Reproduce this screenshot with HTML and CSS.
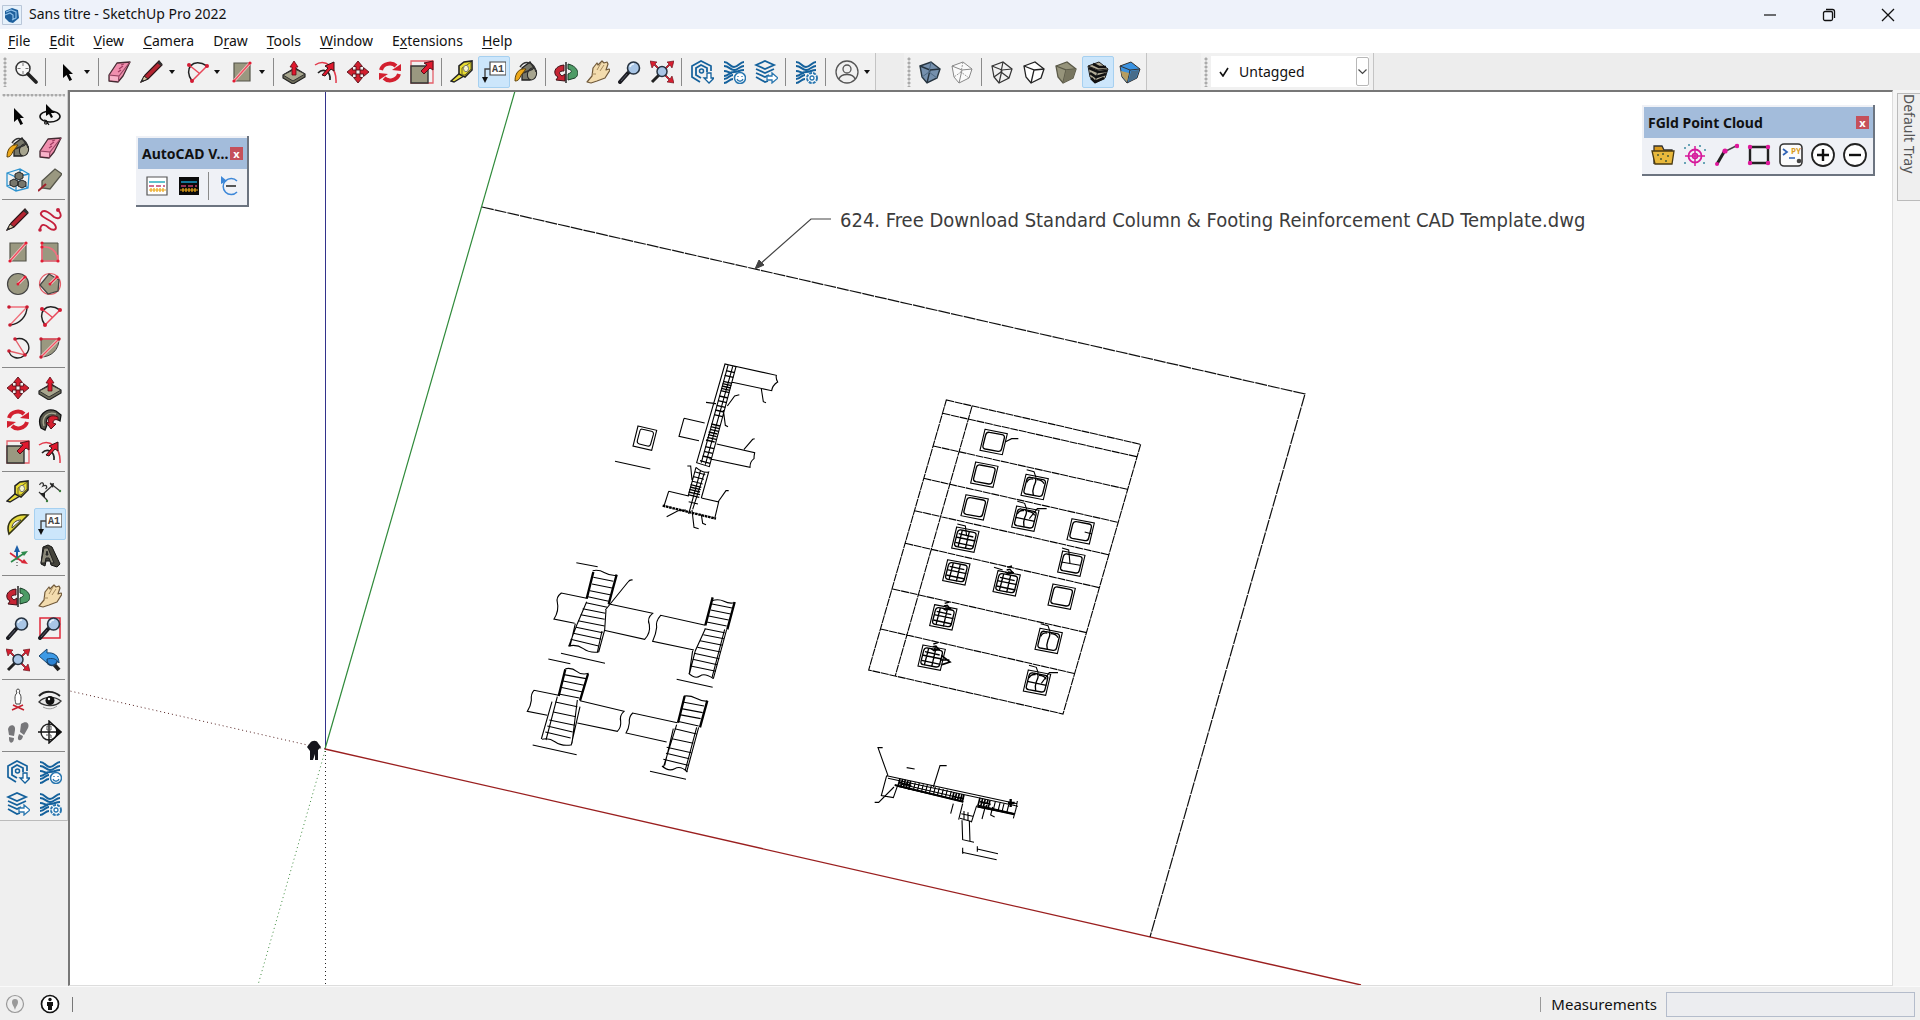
FILE: index.html
```html
<!DOCTYPE html>
<html lang="en">
<head>
<meta charset="utf-8">
<title>Sans titre - SketchUp Pro 2022</title>
<link rel="stylesheet" href="styles.css">
</head>
<body>
<svg class="sprite" aria-hidden="true">
<defs>
<g id="glass"><path d="M2 22l8-9" stroke="#1c1c22" stroke-width="4" stroke-linecap="round"/><path d="M3 21l6-7" stroke="#555a66" stroke-width="1"/><circle cx="15.500" cy="8" r="6" fill="#a9c6e6" stroke="#26323f" stroke-width="1.600"/><path d="M12 7a4 4 0 0 1 4-3" stroke="#e8f2fb" stroke-width="1.500"/></g>
<g id="waves"><path d="M2 2c5 0 6 5 10 5s6-5 10-5M2 6c5 0 6 4 10 4s6-4 10-4M2 11c4 0 5 2 8 2M2 16c5 0 5-4 10-4s5-2 10-2M2 19c5 0 5-4 9-4M2 23c4 0 5-4 9-4" stroke="#14619c" stroke-width="2"/></g>
<symbol id="i-find" viewBox="0 0 24 24"><circle cx="9" cy="8.500" r="7" stroke="#333" stroke-width="1.500" fill="#f8f8f8"/><path d="M9 3v3M9 11v3M3.500 8.500h3M11.500 8.500h3" stroke="#777"/><path d="M14 14l8 8" stroke="#222" stroke-width="3.600" stroke-linecap="round"/></symbol>
<symbol id="i-cursor" viewBox="0 0 24 24"><path d="M8 4v14l3.500-3 3 6 2.500-1.200-3-5.800h4z" fill="#050505"/></symbol>
<symbol id="i-lasso" viewBox="0 0 24 24"><ellipse cx="12" cy="12.500" rx="10" ry="5.500" stroke="#111" stroke-width="1.600"/><path d="M6 16c4 0 4 4 2 4s-2-3 1-2l2 3" stroke="#111" stroke-width="1.200"/><path d="M8 0v12l3-2 2 4 2-1-2-4h4z" fill="#050505"/></symbol>
<symbol id="i-eraser" viewBox="0 0 24 24"><path d="M2 15L10 3l13-1-7 14-5 6-9-1z" fill="#f08fae" stroke="#442a32" stroke-width="1.300" stroke-linejoin="round"/><path d="M2 15l10 1 11-14M12 16l-1 6" stroke="#8f4360" stroke-width="1.100"/><path d="M3 16l8 1v4l-8-1z" fill="#f7b3c9"/><path d="M14 5l3-1M12 9l4-3M11 12l3-2" stroke="#a03b62" stroke-width="1.200"/></symbol>
<symbol id="i-pencil" viewBox="0 0 24 24"><path d="M1 22l4-7L19 1l3 4L8 19z" fill="#b52531" stroke="#2c1518" stroke-width="1.200"/><path d="M1 22l3-6 4 3z" fill="#d7c4a3" stroke="#222"/><path d="M1 22l1.500-3 1.500 1.700zM17 3l4 3 1.500-2-3-3z" fill="#333"/></symbol>
<symbol id="i-arc2" viewBox="0 0 24 24"><path d="M7 21C-2 9 8-3 22 6" stroke="#222" stroke-width="1.500"/><path d="M4 5l10 8M22 6L7 21" stroke="#e8485a" stroke-width="1.500"/><g fill="#d31b33"><circle cx="4" cy="5" r="2"/><circle cx="22" cy="6" r="2"/><circle cx="7" cy="21" r="2"/></g></symbol>
<symbol id="i-rect" viewBox="0 0 24 24"><path d="M4 3h16v18H4z" fill="#9a9880" stroke="#55554a" stroke-width="1.200"/><path d="M4 21L20 3" stroke="#f3c9c9" stroke-width="3"/><path d="M4 21L20 3" stroke="#ef5060" stroke-width="1.500"/><circle cx="4" cy="21" r="1.600" fill="#e31b33"/><circle cx="20" cy="3" r="1.600" fill="#e31b33"/></symbol>
<symbol id="i-push" viewBox="0 0 24 24"><path d="M1 15l12-7 10 6v3l-12 7-10-6z" fill="#6e6d5a" stroke="#222" stroke-width="1.200"/><path d="M1 15l12-6 10 5-12 7z" fill="#a9a78e" stroke="#333"/><path d="M12 1l4 6h-2v8h-4V7H8z" fill="#e0182d" stroke="#5a0d15" stroke-width=".8"/></symbol>
<symbol id="i-offset" viewBox="0 0 24 24"><path d="M1 5c10-7 22 2 21 18" stroke="#e2394a" stroke-width="1.500"/><path d="M4 13c5-5 13-2 12 7" stroke="#222" stroke-width="1.700"/><path d="M8 15l6-7-3-2 9-4v9l-3-2-6 7z" fill="#e0182d" stroke="#321014"/></symbol>
<symbol id="i-move" viewBox="0 0 24 24"><path id="mv" d="M12 1l4.500 5.500H14V10h-4V6.500H7.500z" fill="#d3202f" stroke="#55121a" stroke-width=".9"/><use href="#mv" transform="rotate(90 12 12)"/><use href="#mv" transform="rotate(180 12 12)"/><use href="#mv" transform="rotate(270 12 12)"/></symbol>
<symbol id="i-rotate" viewBox="0 0 24 24"><path d="M3 10C5 3 14 2 18 6" stroke="#d3202f" stroke-width="4"/><path d="M14 10l9-6v7z" fill="#d3202f"/><path d="M21 14c-2 7-11 8-15 4" stroke="#d3202f" stroke-width="4"/><path d="M10 14l-9 6v-7z" fill="#d3202f"/></symbol>
<symbol id="i-scale" viewBox="0 0 24 24"><path d="M1 1h22v22H1z" stroke="#e4606a" stroke-width="1.300"/><path d="M1 6h17v17H1z" fill="#9a9880" stroke="#333" stroke-width="1.400"/><path d="M11 11l6-6-3-2 9-2v9l-3-2-6 6z" fill="#e0182d" stroke="#55121a"/></symbol>
<symbol id="i-tape" viewBox="0 0 24 24"><path d="M1 21l9-8 4 3-10 6z" fill="#eadf3a" stroke="#222" stroke-width="1.400"/><path d="M9 14V6l5-4 8-1v9l-7 7z" fill="#e8dc32" stroke="#222" stroke-width="1.600"/><path d="M12 8l5-3 4-3v7l-6 6-3 0z" stroke="#6a6420"/><ellipse cx="16" cy="8.500" rx="2.500" ry="3.200" fill="#f8f6cf" stroke="#777"/></symbol>
<symbol id="i-text" viewBox="0 0 24 24"><path d="M8 2h16v13H8z" fill="#fff" stroke="#444" stroke-width="1.200"/><path d="M8 9H3v11" stroke="#444" stroke-width="1.400"/><path d="M0 17h6l-3 6z" fill="#111"/><text x="10" y="12" class="glyph-a1">A1</text></symbol>
<symbol id="i-paint" viewBox="0 0 24 24"><path d="M8 8l8-6 6 9-6 9H8z" fill="#77776a" stroke="#222" stroke-width="1.300"/><ellipse cx="18" cy="14" rx="4.500" ry="6" fill="#a7a58f" stroke="#222" transform="rotate(15 18 14)"/><path d="M6 7c6-9 15-3 16 5M9 13l10-4" stroke="#333" stroke-width="1.500"/><path d="M1 21C1 12 6 8 12 9L8 14c-2 2-2 7-7 7z" fill="#eda81a" stroke="#5f430c"/></symbol>
<symbol id="i-orbit" viewBox="0 0 24 24"><path d="M10 5C-1 6-1 15 4 17l-2 3 9 1v-7l-3 2C4 13 5 11 10 11z" fill="#c62534" stroke="#3f1117"/><path d="M14 4c12 3 11 12 7 14l-7 2v-6c5-2 4-4 0-5z" fill="#4d9b66" stroke="#173a25"/><path d="M12 2v21" stroke="#222" stroke-width="1.500"/></symbol>
<symbol id="i-hand" viewBox="0 0 24 24"><path d="M1 22l5-6 1-8 4-5 1 2 4-4 2 2 3-1 1 2-2 6 3-1 1 1-5 8-8 3-6 2z" fill="#f3dcae" stroke="#70593a" stroke-width="1.200" stroke-linejoin="round"/><path d="M11 10l4-7M14 11l4-6M10 14l-4 0" stroke="#a58a5e"/></symbol>
<symbol id="i-zoom" viewBox="0 0 24 24"><use href="#glass"/></symbol>
<symbol id="i-zoomwin" viewBox="0 0 24 24"><path d="M2 2h20v20H2z" stroke="#e0283a" stroke-width="1.500"/><use href="#glass"/></symbol>
<symbol id="i-extents" viewBox="0 0 24 24"><path d="M2 22l8-8" stroke="#222" stroke-width="3"/><g fill="#d81f30" stroke="#5a0d15" stroke-width=".6"><path id="ex" d="M0 1l7 1-2 2 4 4-1 1-4-4-2 3z"/><use href="#ex" transform="matrix(-1 0 0 1 24 0)"/><use href="#ex" transform="rotate(180 12 12)"/></g><circle cx="12" cy="11.500" r="5" fill="#a9c6e6" stroke="#26323f" stroke-width="1.500"/></symbol>
<symbol id="i-prev" viewBox="0 0 24 24"><path d="M13 13l8 9" stroke="#222" stroke-width="4"/><circle cx="14" cy="12" r="5.500" fill="#2c83d4" stroke="#20405f" stroke-width="1.500"/><path d="M1 8l8-7v4c7-1 12 3 12 10-3-5-7-5-12-4v4z" fill="#3d9ae6" stroke="#1a466f"/></symbol>
<symbol id="i-house" viewBox="0 0 24 24"><path d="M21 11V6l-10-5-9 5v11l8 5" stroke="#14619c" stroke-width="1.700"/><path d="M17 12V8l-6-3-5 3v7l5 3" stroke="#14619c" stroke-width="1.800"/><circle cx="11.500" cy="11" r="2" stroke="#14619c" stroke-width="1.500"/><path d="M17 13h4v5h3l-5 5-5-5h3z" fill="#fff" stroke="#14619c" stroke-width="1.300"/></symbol>
<symbol id="i-share" viewBox="0 0 24 24"><use href="#waves"/><circle cx="18" cy="18" r="5.500" fill="#fff" stroke="#2a77b0" stroke-width="1.500"/><path d="M15 19c1 3 5 3 6 0M16 16v1M20 16v1" stroke="#2a77b0" stroke-width="1.300"/></symbol>
<symbol id="i-layers" viewBox="0 0 24 24"><path d="M2 5l9-4 9 4-9 4zM2 9l9 4 9-4M2 13l9 4 4-2M2 17l9 5 3-1" stroke="#14619c" stroke-width="1.800"/><path d="M13 16h5v-3l6 5-6 5v-3h-5z" fill="#fff" stroke="#2a77b0" stroke-width="1.300"/></symbol>
<symbol id="i-manager" viewBox="0 0 24 24"><use href="#waves"/><circle cx="18" cy="18" r="5" fill="#fff" stroke="#2a77b0" stroke-width="2" stroke-dasharray="3 1"/><circle cx="18" cy="18" r="2" stroke="#2a77b0" stroke-width="1.300"/></symbol>
<symbol id="i-user" viewBox="0 0 24 24"><circle cx="12" cy="12" r="11" stroke="#555" stroke-width="1.300"/><circle cx="12" cy="9" r="4" stroke="#555" stroke-width="1.300"/><path d="M4 19c2-6 14-6 16 0" stroke="#555" stroke-width="1.300"/></symbol>
<g id="cube"><path d="M2 6L13 2l9 7-3 9-10 5-5-6z"/><path d="M2 6l10 4-3 13M12 10l10-1" fill="none"/></g>
<g id="cubeback"><path d="M13 2l-2 10 8 6M11 12l-7 5"/></g>
<symbol id="i-xray" viewBox="0 0 24 24"><g fill="#7590ad" stroke="#26343f" stroke-width="1.400"><use href="#cube"/></g><g stroke="#4c6883"><use href="#cubeback"/></g></symbol>
<symbol id="i-back" viewBox="0 0 24 24"><g stroke="#888" fill="#fafafa"><use href="#cube"/></g><g stroke="#999" stroke-dasharray="2 1"><use href="#cubeback"/></g></symbol>
<symbol id="i-wire" viewBox="0 0 24 24"><g stroke="#333" stroke-width="1.200"><use href="#cube"/><use href="#cubeback"/></g></symbol>
<symbol id="i-hidden" viewBox="0 0 24 24"><g stroke="#222" fill="#fff" stroke-width="1.300"><use href="#cube"/></g></symbol>
<symbol id="i-shaded" viewBox="0 0 24 24"><g stroke="#5a5948" fill="#96947b" stroke-width="1.300"><use href="#cube"/></g><path d="M12 10l10-1-3 9-10 5z" fill="#77755f"/></symbol>
<symbol id="i-textured" viewBox="0 0 24 24"><g stroke="#222" fill="#b3ad98"><use href="#cube"/></g><path d="M3 8l9 4 9-1M4 13l6 4 10-3M5 18l4 4 9-4M7 4l6 3 7 0" stroke="#111" stroke-width="2.600"/></symbol>
<symbol id="i-mono" viewBox="0 0 24 24"><g stroke="#333" fill="#3a92e0"><use href="#cube"/></g><path d="M3 11l8 2-2 9-5-6z" fill="#b79d5f"/><path d="M13 11l8-1-3 8-8 4z" fill="#476c8a"/></symbol>
<symbol id="i-component" viewBox="0 0 24 24"><path d="M1 5l13-4 9 5-1 14-12 3-9-5zM1 5l9 4 13-3M10 9v14M14 1v13l8 6M1 18l13-4" stroke="#2d93cf" stroke-width="1.300"/><g fill="#77776c" stroke="#222"><path d="M9 6l4-2 4 2v4l-4 2-4-2zM4 13l4-2 4 2v4l-4 2-4-2zM12 14l4-2 4 2v4l-4 2-4-2z"/></g></symbol>
<symbol id="i-tag" viewBox="0 0 24 24"><path d="M4 13L17 1l7 5-12 15-8-1z" fill="#9a9880" stroke="#55554a" stroke-width="1.300"/><path d="M0 23l8-7" stroke="#a0222d" stroke-width="2"/></symbol>
<symbol id="i-free" viewBox="0 0 24 24"><path d="M2 22c1-8 6-5 9-2 4 3 9 2 6-3C14 12 1 9 3 5c3-5 10 1 13 4 5 3 9 0 5-6" stroke="#c4203c" stroke-width="1.900"/><circle cx="2" cy="22" r="1.800" fill="#c4203c"/><circle cx="20" cy="2" r="2" fill="#c4203c"/></symbol>
<symbol id="i-rotrect" viewBox="0 0 24 24"><path d="M4 3h16v18H4z" fill="#9a9880" stroke="#55554a"/><path d="M4 3v18h16V15M4 7c8-1 15 3 16 14" stroke="#ef7080" stroke-width="1.700"/><g fill="#e31b33"><circle cx="4" cy="3" r="1.600"/><circle cx="4" cy="7" r="1.600"/><circle cx="4" cy="21" r="1.600"/><circle cx="20" cy="21" r="1.600"/></g></symbol>
<symbol id="i-circle" viewBox="0 0 24 24"><circle cx="12" cy="12" r="10.500" fill="#9a9880" stroke="#444" stroke-width="1.200"/><path d="M12 12l7-7" stroke="#f3d3d3" stroke-width="3"/><path d="M12 12l7-7" stroke="#e31b33" stroke-width="1.300"/><circle cx="12" cy="12" r="1.500" fill="#e31b33"/><circle cx="19" cy="5" r="1.600" fill="#e31b33"/></symbol>
<symbol id="i-polygon" viewBox="0 0 24 24"><circle cx="12" cy="12" r="10.500" stroke="#e4606a" stroke-width="1.200"/><path d="M11 2l10 6-1 11-10 3-8-9z" fill="#9a9880" stroke="#444" stroke-width="1.300"/><path d="M12 12l7-7" stroke="#f3d3d3" stroke-width="3"/><path d="M12 12l7-7" stroke="#e31b33" stroke-width="1.300"/><circle cx="12" cy="12" r="1.500" fill="#e31b33"/><circle cx="19" cy="5" r="1.600" fill="#e31b33"/></symbol>
<symbol id="i-arc" viewBox="0 0 24 24"><path d="M21 3c0 9-7 17-17 18" stroke="#222" stroke-width="1.400"/><path d="M3 3h18L4 21" stroke="#f0707c" stroke-width="1.400"/><g fill="#c81b30"><circle cx="3" cy="3" r="1.800"/><circle cx="21" cy="3" r="1.800"/><circle cx="4" cy="21" r="1.800"/></g></symbol>
<symbol id="i-arc3" viewBox="0 0 24 24"><path d="M9 3c13-3 18 10 10 16-7 6-15 2-16-4" stroke="#222" stroke-width="1.400"/><path d="M9 3l10 16L3 15" stroke="#e4606a" stroke-width="1.400"/><g fill="#c81b30"><circle cx="9" cy="3" r="1.800"/><circle cx="19" cy="19" r="1.800"/><circle cx="3" cy="15" r="1.800"/></g></symbol>
<symbol id="i-pie" viewBox="0 0 24 24"><path d="M3 3h18C21 14 13 21 3 21z" fill="#9a9880" stroke="#444"/><path d="M3 21L20 4" stroke="#f3d3d3" stroke-width="3"/><path d="M3 3h18L3 21" stroke="#ef5060" stroke-width="1.400"/><g fill="#c81b30"><circle cx="3" cy="3" r="1.700"/><circle cx="21" cy="3" r="1.700"/><circle cx="3" cy="21" r="1.700"/></g></symbol>
<symbol id="i-follow" viewBox="0 0 24 24"><path d="M3 20C-2 8 8-1 18 3l5 4-1 6-5-3C12 7 7 9 9 17l-2 5z" fill="#57574c" stroke="#111" stroke-width="1.300"/><path d="M6 18C3 9 10 3 18 6" stroke="#aaa890" stroke-width="1.400"/><path d="M20 9c-7-3-11 0-9 6l-3-1 5 7 5-5-3-1c0-3 2-4 5-3z" fill="#d3202f" stroke="#55121a"/></symbol>
<symbol id="i-dim" viewBox="0 0 24 24"><path d="M4 15L15 5M1 12l8 8M12 3l10 8" stroke="#333" stroke-width="1.200"/><path d="M2 13l5 0 0 5zM16 3l-4 1 3 4z" fill="#222"/><path d="M3 3c4-2 5 2 2 3 4 1 3 4 0 4" stroke="#333" stroke-width="1.300" transform="rotate(-40 5 6)"/><circle cx="9" cy="21" r="1.200" fill="#3a7a3a"/><circle cx="22" cy="11" r="1.200" fill="#3a7a3a"/></symbol>
<symbol id="i-protractor" viewBox="0 0 24 24"><path d="M3 22C-1 10 9 1 22 3z" fill="#e3d83a" stroke="#333312" stroke-width="1.600"/><path d="M6 16c0-5 4-8 9-8z" fill="#f0f0f0" stroke="#444"/></symbol>
<symbol id="i-axes" viewBox="0 0 24 24"><path d="M11 14V7" stroke="#1c5fa8" stroke-width="2"/><path d="M11 1l3 7H8z" fill="#1c5fa8"/><path d="M11 14l6 4M11 14L4 9" stroke="#d82838" stroke-width="1.600"/><path d="M22 20l-7-1 3-4z" fill="#d82838"/><path d="M11 14l6-4M11 14l-6 4" stroke="#2d8a4b" stroke-width="1.600"/><path d="M22 7l-4 5-3-4z" fill="#2d8a4b"/><path d="M11 15v8" stroke="#333" stroke-dasharray="1 2"/></symbol>
<symbol id="i-3dtext" viewBox="0 0 24 24"><path d="M3 20l2-17 5-2 4 2 8 17-3 3-6-2-1-4H8l-1 5z" fill="#45443c" stroke="#111"/><path d="M3 19l3-15h4l6 15h-3l-2-5H8l-1 5zM8 11h2L9 7z" fill="#8b897a" stroke="#222"/></symbol>
<symbol id="i-poscam" viewBox="0 0 24 24"><path d="M12 1c2 0 2 3 1 4 3 2 2 8 1 11h-4C9 13 8 7 11 5c-1-1-1-4 1-4z" fill="#fff" stroke="#444"/><path d="M7 17l11 5M17 17L6 22" stroke="#c4202e" stroke-width="1.600"/></symbol>
<symbol id="i-look" viewBox="0 0 24 24"><path d="M1 8c6-6 15-5 21 0" stroke="#222" stroke-width="2"/><path d="M1 14c5-6 16-6 22-1-5 6-16 6-22 1z" fill="#e6e6e6" stroke="#333" stroke-width="1.300"/><circle cx="12" cy="12.500" r="4.500" fill="#111"/><circle cx="11" cy="11" r="1.200" fill="#fff"/><path d="M5 19c6 3 10 2 14-1" stroke="#999"/></symbol>
<symbol id="i-walk" viewBox="0 0 24 24"><g fill="#77777a"><path d="M2 9c2-6 8-4 7 1l-1 6-5-1zM3 17l5 1c0 6-5 6-5 1zM15 4c5-4 9-1 7 4l-4 7-4-3zM13 14l4 2c-1 6-6 5-5 1z"/></g></symbol>
<symbol id="i-section" viewBox="0 0 24 24"><circle cx="11" cy="12" r="8" fill="#fff" stroke="#222" stroke-width="1.400"/><path d="M0 12h22M11 1l12 11-12 11z" stroke="#111" stroke-width="1.400"/><path d="M18 7l6 5-6 5z" fill="#111"/><path d="M9 6v4h4V6zM8 15h5v3" stroke="#555"/></symbol>
<symbol id="i-std" viewBox="0 0 24 24"><path d="M2 3h20v18H2z" fill="#fff" stroke="#555" stroke-width="1.200"/><path d="M4 8h16" stroke="#19a7b8" stroke-width="1.400"/><path d="M4 12h16" stroke="#c2406f" stroke-width="1.400" stroke-dasharray="5 2"/><path d="M4 16h17M6 14v4M9 14v4M12 14v4M15 14v4M18 14v4" stroke="#eda81a" stroke-width="1.200"/></symbol>
<symbol id="i-dark" viewBox="0 0 24 24"><path d="M2 3h20v18H2z" fill="#0b0b0b"/><path d="M4 8h16" stroke="#19a7d8" stroke-width="1.400"/><path d="M4 12h16" stroke="#c2406f" stroke-width="1.400" stroke-dasharray="5 2"/><path d="M3 16h18M6 14v4M9 14v4M12 14v4M15 14v4M18 14v4" stroke="#eda81a" stroke-width="1.200"/></symbol>
<symbol id="i-undo" viewBox="0 0 24 24"><path d="M20 7a8 8 0 1 0 0 11" stroke="#3c87d8" stroke-width="1.500"/><path d="M4 2l6 5-6 3z" fill="#3c87d8"/><path d="M9 12h10" stroke="#222" stroke-width="1.500"/></symbol>
<symbol id="i-folder" viewBox="0 0 24 24"><path d="M3 21V3h8l2 4h8v3" fill="#d99b1d" stroke="#333" stroke-width="1.300"/><path d="M1 8h22l-2 13H4z" fill="#e9b93c" stroke="#4a3a12" stroke-width="1.300"/><g fill="#4a5a30"><circle cx="7" cy="12" r="1"/><circle cx="12" cy="11" r="1"/><circle cx="17" cy="13" r="1"/><circle cx="10" cy="16" r="1"/><circle cx="15" cy="18" r="1"/></g></symbol>
<symbol id="i-target" viewBox="0 0 24 24"><circle cx="12" cy="13" r="6.500" stroke="#d61a9a" stroke-width="1.800"/><circle cx="12" cy="13" r="2.500" stroke="#d61a9a" stroke-width="1.600"/><path d="M12 3v20M2 13h20" stroke="#d61a9a" stroke-width="1.500"/><g fill="#3c8aa0"><circle cx="2" cy="5" r="1"/><circle cx="6" cy="2" r="1"/><circle cx="17" cy="3" r="1"/><circle cx="22" cy="7" r="1"/><circle cx="2" cy="20" r="1"/><circle cx="21" cy="20" r="1"/></g></symbol>
<symbol id="i-curve" viewBox="0 0 24 24"><path d="M2 21L9 9" stroke="#222" stroke-width="3"/><path d="M9 9l12-6" stroke="#444" stroke-width="1.500"/><g fill="#e0169c"><circle cx="2" cy="21" r="2"/><circle cx="10" cy="8" r="2.600"/><circle cx="22" cy="3" r="2.300"/></g></symbol>
<symbol id="i-bounds" viewBox="0 0 24 24"><path d="M3 4h18v16H3z" stroke="#222" stroke-width="2.400"/><g fill="#e0169c"><circle cx="3" cy="4" r="2.200"/><circle cx="21" cy="4" r="2.200"/><circle cx="3" cy="20" r="2.200"/><circle cx="21" cy="20" r="2.200"/></g></symbol>
<symbol id="i-py" viewBox="0 0 24 24"><rect x="1" y="1" width="22" height="22" rx="4" fill="#fbfbfb" stroke="#333" stroke-width="1.600"/><path d="M4 6l4 3-4 3M10 15h6" stroke="#2f62b5" stroke-width="1.700"/><text x="12" y="11" class="glyph-py">PY</text><circle cx="20" cy="18" r="2.300" fill="#444"/></symbol>
<symbol id="i-plus" viewBox="0 0 24 24"><circle cx="12" cy="12" r="11" fill="#fff" stroke="#222" stroke-width="1.800"/><path d="M12 6v12M6 12h12" stroke="#111" stroke-width="2.400"/></symbol>
<symbol id="i-minus" viewBox="0 0 24 24"><circle cx="12" cy="12" r="11" fill="#fff" stroke="#222" stroke-width="1.800"/><path d="M6 12h12" stroke="#111" stroke-width="2.400"/></symbol>
</defs>
</svg>

<div class="app">
<header class="titlebar">
<svg class="logo" viewBox="0 0 20 20" aria-hidden="true"><path d="M.5.500h19v19H.5z" fill="#e6f1fb" stroke="#b9c6d8"/><path d="M3 6l7-3 6 2 1 8-6 5-4-1-4-4z" fill="#1d5f9c"/><path d="M4 7l5-2 5 2v6l-4 2M3 10l5-2 3 2v4" stroke="#8fc0e8" stroke-width="1.200"/></svg>
<h1>Sans titre - SketchUp Pro 2022</h1>
<div class="winctl">
<button aria-label="Minimize"><svg viewBox="0 0 14 14"><path d="M1 7h12" stroke="#111" stroke-width="1.200"/></svg></button>
<button aria-label="Restore"><svg viewBox="0 0 14 14"><rect x="1.500" y="3.500" width="9" height="9" rx="1.500" stroke="#111" stroke-width="1.300"/><path d="M4 1.500h6.500a2 2 0 0 1 2 2V10" stroke="#111" stroke-width="1.300"/></svg></button>
<button aria-label="Close"><svg viewBox="0 0 14 14"><path d="M1 1l12 12M13 1L1 13" stroke="#111" stroke-width="1.300"/></svg></button>
</div>
</header>
<nav class="menubar">
<button><u>F</u>ile</button><button><u>E</u>dit</button><button><u>V</u>iew</button><button><u>C</u>amera</button><button>D<u>r</u>aw</button><button><u>T</u>ools</button><button><u>W</u>indow</button><button>E<u>x</u>tensions</button><button><u>H</u>elp</button>
</nav>
<div class="toolrow">
<div class="group" role="toolbar" aria-label="Getting started">
<i class="grip"></i>
<button class="tool" aria-label="Search"><svg><use href="#i-find"/></svg></button>
<i class="sep"></i>
<button class="tool drop" aria-label="Select"><svg><use href="#i-cursor"/></svg></button>
<i class="sep"></i>
<button class="tool" aria-label="Eraser"><svg><use href="#i-eraser"/></svg></button>
<button class="tool drop" aria-label="Line"><svg><use href="#i-pencil"/></svg></button>
<button class="tool drop" aria-label="Arc"><svg><use href="#i-arc2"/></svg></button>
<button class="tool drop" aria-label="Rectangle"><svg><use href="#i-rect"/></svg></button>
<i class="sep"></i>
<button class="tool" aria-label="Push/Pull"><svg><use href="#i-push"/></svg></button>
<button class="tool" aria-label="Offset"><svg><use href="#i-offset"/></svg></button>
<button class="tool" aria-label="Move"><svg><use href="#i-move"/></svg></button>
<button class="tool" aria-label="Rotate"><svg><use href="#i-rotate"/></svg></button>
<button class="tool" aria-label="Scale"><svg><use href="#i-scale"/></svg></button>
<i class="sep"></i>
<button class="tool" aria-label="Tape Measure"><svg><use href="#i-tape"/></svg></button>
<button class="tool on" aria-label="Text"><svg><use href="#i-text"/></svg></button>
<button class="tool" aria-label="Paint Bucket"><svg><use href="#i-paint"/></svg></button>
<i class="sep"></i>
<button class="tool" aria-label="Orbit"><svg><use href="#i-orbit"/></svg></button>
<button class="tool" aria-label="Pan"><svg><use href="#i-hand"/></svg></button>
<button class="tool" aria-label="Zoom"><svg><use href="#i-zoom"/></svg></button>
<button class="tool" aria-label="Zoom Extents"><svg><use href="#i-extents"/></svg></button>
<i class="sep"></i>
<button class="tool" aria-label="3D Warehouse"><svg><use href="#i-house"/></svg></button>
<button class="tool" aria-label="Extension Warehouse"><svg><use href="#i-share"/></svg></button>
<button class="tool" aria-label="Send to LayOut"><svg><use href="#i-layers"/></svg></button>
<i class="sep"></i>
<button class="tool" aria-label="Extension Manager"><svg><use href="#i-manager"/></svg></button>
<i class="sep"></i>
<button class="tool drop" aria-label="Account"><svg><use href="#i-user"/></svg></button>
</div>
<div class="group" role="toolbar" aria-label="Styles">
<i class="grip"></i>
<button class="tool" aria-label="X-Ray"><svg><use href="#i-xray"/></svg></button>
<button class="tool" aria-label="Back Edges"><svg><use href="#i-back"/></svg></button>
<i class="sep"></i>
<button class="tool" aria-label="Wireframe"><svg><use href="#i-wire"/></svg></button>
<button class="tool" aria-label="Hidden Line"><svg><use href="#i-hidden"/></svg></button>
<button class="tool" aria-label="Shaded"><svg><use href="#i-shaded"/></svg></button>
<button class="tool on" aria-label="Shaded With Textures"><svg><use href="#i-textured"/></svg></button>
<button class="tool" aria-label="Monochrome"><svg><use href="#i-mono"/></svg></button>
</div>
<div class="group tags">
<i class="grip"></i>
<div class="tagbox">
<svg class="check" viewBox="0 0 10 10" aria-hidden="true"><path d="M1 5l3 4 5-8" stroke="#111" stroke-width="1.600"/></svg>
<select aria-label="Tag"><option>Untagged</option></select>
<svg class="chev" viewBox="0 0 13 29" aria-hidden="true"><rect x=".5" y=".5" width="12" height="28" rx="1.500" fill="#fff" stroke="#b8b8b8"/><path d="M2.500 12.500l4 4 4-4" stroke="#444" stroke-width="1.200"/></svg>
</div>
</div>
</div>

<main class="work">
<aside class="side">
<div class="palette" role="toolbar" aria-label="Large tool set">
<i class="hgrip"></i>
<div class="pair">
<button class="tool" aria-label="Select"><svg><use href="#i-cursor"/></svg></button><button class="tool" aria-label="Lasso"><svg><use href="#i-lasso"/></svg></button>
<button class="tool" aria-label="Paint Bucket"><svg><use href="#i-paint"/></svg></button><button class="tool" aria-label="Eraser"><svg><use href="#i-eraser"/></svg></button>
<button class="tool" aria-label="Make Component"><svg><use href="#i-component"/></svg></button><button class="tool" aria-label="Tag"><svg><use href="#i-tag"/></svg></button>
</div>
<div class="pair">
<button class="tool" aria-label="Line"><svg><use href="#i-pencil"/></svg></button><button class="tool" aria-label="Freehand"><svg><use href="#i-free"/></svg></button>
<button class="tool" aria-label="Rectangle"><svg><use href="#i-rect"/></svg></button><button class="tool" aria-label="Rotated Rectangle"><svg><use href="#i-rotrect"/></svg></button>
<button class="tool" aria-label="Circle"><svg><use href="#i-circle"/></svg></button><button class="tool" aria-label="Polygon"><svg><use href="#i-polygon"/></svg></button>
<button class="tool" aria-label="Arc"><svg><use href="#i-arc"/></svg></button><button class="tool" aria-label="2 Point Arc"><svg><use href="#i-arc2"/></svg></button>
<button class="tool" aria-label="3 Point Arc"><svg><use href="#i-arc3"/></svg></button><button class="tool" aria-label="Pie"><svg><use href="#i-pie"/></svg></button>
</div>
<div class="pair">
<button class="tool" aria-label="Move"><svg><use href="#i-move"/></svg></button><button class="tool" aria-label="Push/Pull"><svg><use href="#i-push"/></svg></button>
<button class="tool" aria-label="Rotate"><svg><use href="#i-rotate"/></svg></button><button class="tool" aria-label="Follow Me"><svg><use href="#i-follow"/></svg></button>
<button class="tool" aria-label="Scale"><svg><use href="#i-scale"/></svg></button><button class="tool" aria-label="Offset"><svg><use href="#i-offset"/></svg></button>
</div>
<div class="pair">
<button class="tool" aria-label="Tape Measure"><svg><use href="#i-tape"/></svg></button><button class="tool" aria-label="Dimension"><svg><use href="#i-dim"/></svg></button>
<button class="tool" aria-label="Protractor"><svg><use href="#i-protractor"/></svg></button><button class="tool on" aria-label="Text"><svg><use href="#i-text"/></svg></button>
<button class="tool" aria-label="Axes"><svg><use href="#i-axes"/></svg></button><button class="tool" aria-label="3D Text"><svg><use href="#i-3dtext"/></svg></button>
</div>
<div class="pair">
<button class="tool" aria-label="Orbit"><svg><use href="#i-orbit"/></svg></button><button class="tool" aria-label="Pan"><svg><use href="#i-hand"/></svg></button>
<button class="tool" aria-label="Zoom"><svg><use href="#i-zoom"/></svg></button><button class="tool" aria-label="Zoom Window"><svg><use href="#i-zoomwin"/></svg></button>
<button class="tool" aria-label="Zoom Extents"><svg><use href="#i-extents"/></svg></button><button class="tool" aria-label="Previous"><svg><use href="#i-prev"/></svg></button>
</div>
<div class="pair">
<button class="tool" aria-label="Position Camera"><svg><use href="#i-poscam"/></svg></button><button class="tool" aria-label="Look Around"><svg><use href="#i-look"/></svg></button>
<button class="tool" aria-label="Walk"><svg><use href="#i-walk"/></svg></button><button class="tool" aria-label="Section Plane"><svg><use href="#i-section"/></svg></button>
</div>
<div class="pair">
<button class="tool" aria-label="3D Warehouse"><svg><use href="#i-house"/></svg></button><button class="tool" aria-label="Extension Warehouse"><svg><use href="#i-share"/></svg></button>
<button class="tool" aria-label="Send to LayOut"><svg><use href="#i-layers"/></svg></button><button class="tool" aria-label="Extension Manager"><svg><use href="#i-manager"/></svg></button>
</div>
</div>
</aside>

<section class="viewport" aria-label="Model">
<svg class="model">
<defs>
<g id="box"><path d="M-26-38L41-25 26 38-41 25z"/><path d="M-12-29L25-22Q34-20 32-12L24 20Q22 29 13 28L-25 21Q-34 19-32 11L-24-21Q-21-31-12-29z" stroke-width="4"/></g>
<g id="v2"><use href="#box"/><path d="M0-27c8 6 2 14-2 24s-4 20-2 28M-24-14c4-8 10-12 20-10M6-22c10 0 18 4 22 12" stroke-width="4"/><path d="M-24-52l22 6 6 18"/></g>
<g id="v4"><use href="#v2"/><path d="M-29-4L28 8" stroke-width="4"/></g>
<g id="v9"><use href="#box"/><path d="M-9-28l-13 50M12-24L0 27M-28-8L30 4M-30 8L26 20M-20-18L24-8" stroke-width="4"/></g>
<g id="knot"><path d="M-4-42l10-2 8 10-14 4-8-6M-2-50l14-4M0-36l18 2" stroke-width="4"/></g>
</defs>
<g transform="translate(-70 -92)" fill="none">
<path d="M325.500 749V91" stroke="#33338c"/>
<path d="M325 749L515 91" stroke="#2f8a3a" stroke-width="1.200"/>
<path d="M325 749L1361 985" stroke="#9a1f1f" stroke-width="1.300"/>
<path d="M325.500 751v234" stroke="#222" stroke-dasharray="1 3"/>
<path d="M325 751L258 985" stroke="#3d8a3d" stroke-dasharray="1 3"/>
<path d="M325 749L70 691" stroke="#522" stroke-dasharray="1 3"/>
<path d="M482 207L1305 394 1150 937" stroke="#111" stroke-width="1.200" stroke-dasharray="12 1"/>
<path d="M831 219h-20l-52 46" stroke="#444" stroke-width="1.200"/><path d="M755 269l4-9 5 5z" fill="#444" stroke="#444"/>
<text x="840" y="227" class="leader">624. Free Download Standard Column &amp; Footing Reinforcement CAD Template.dwg</text>
<path d="M310 743c2-3 7-3 8 0l3 4-3 3v10h-3v-6l-2 6h-3v-9l-3-4z" fill="#15151c"/>

<g transform="translate(860 390) scale(.33333)" stroke="#000" stroke-width="3.300">
<path stroke-dasharray="24 2" d="M259 30L842 163 609 972 26 840zM336 49L106 857M248 70L830 200M220 168L803 298M191 265L774 397M164 362L745 494M136 460L718 593M98 597L680 728M62 717L645 851"/>
<use href="#box" x="401" y="156"/><path d="M435 156l20-10h20"/>
<use href="#box" x="373" y="254"/><use href="#v2" x="524" y="291"/>
<use href="#box" x="344" y="352"/><use href="#v4" x="496" y="386"/><path d="M508 386l24-30h28"/><use href="#box" x="662" y="424"/><path d="M674 426l22 6"/>
<use href="#v9" x="316" y="449"/><path d="M292 402l24 6 4 30"/><use href="#box" x="634" y="521"/><path d="M606 474l20 6 4 40M604 516l56 10"/>
<use href="#v9" x="289" y="547"/><use href="#v9" x="440" y="580"/><use href="#knot" x="444" y="582"/><path d="M402 532l26 8"/><use href="#box" x="605" y="620"/>
<use href="#v9" x="250" y="682"/><use href="#knot" x="256" y="690"/><use href="#v2" x="566" y="753"/>
<use href="#v9" x="215" y="803"/><use href="#knot" x="222" y="812"/><path d="M244 796l26 20-24 8M240 810h28" stroke-width="5"/>
<use href="#v4" x="531" y="878"/><path d="M544 880l24-32h26"/>
</g>

<g transform="translate(600 350) scale(.33333)" stroke="#000" stroke-width="3.300">
<path d="M114 228l56 13-15 60-56-13z"/><path d="M128 238l26 6q8 2 6 10l-8 28q-2 8-10 6l-24-6q-8-2-6-10l8-30q2-6 8-4z"/><path d="M45 334l106 23"/>
<path d="M375 42L290 338l38 12L408 50zM384 46L304 338M398 50l-82 294M375 42l154 34q-2 10 4 20-16 10-18 26l-118-25M484 117l6 38 8 3M418 134l-14 4-22 30M318 157l30 4M370 180l6 46 8 4M252 205l62 14M252 205l-15 54 60 13M350 282l114 26q-2 10-2 18-12 8-12 26l-122-26M432 298l26-30 6-2"/>
<path d="M378 62l26 6M374 76l26 6M358 138l26 6M354 152l26 6M350 166l26 6M346 180l26 6M342 194l26 6M316 290l26 6M312 304l26 6M308 318l26 6M300 332l30 8" stroke-width="4"/>
<path d="M370 94l26 6M368 101l26 6M366 108l26 6M364 115l26 6M362 122l26 6M334 222l26 6M332 230l26 6M330 238l26 6M326 246l26 6M324 254l26 6M322 262l26 6M318 270l26 6" stroke-width="4"/>
<path d="M288 352q20 18 38 14L304 444M288 352L264 440M302 360l-36 132M314 366l-36 112M286 366l30 8M282 380l30 8M278 394l30 8M262 348h10l4 42M206 424l60 14M304 444l52 12-12 50M206 424l-14 44M386 422h-8l-24 34M266 455l28 7"/>
<path d="M272 404l32 8M270 411l32 8M268 418l32 8M266 426l34 8M264 434l34 8" stroke-width="4"/><path d="M188 467l160 39" stroke-width="7" stroke-dasharray="8 2"/>
<path d="M200 500l34-18 24-2M276 480l6 52 14 4M304 494l4 26 10 4"/>
</g>

<g transform="translate(510 550) scale(.33333)" stroke="#000" stroke-width="3.300">
<path d="M199 38l64 12M153 310l132 30M115 327l66 14M68 585l132 29M500 388l108 24M420 664l108 24"/>
<path d="M230 145l-76-16q-16 12-12 28 6 24-10 50l62 13M294 161l134 29q-18 14-10 34 4 26-14 44l-122-27M586 226l-134-30q-16 18-12 36-2 20-12 42l124 26M368 90q-8-2-14 6l-68 84"/>
<path d="M146 436l-74-15q-10 10-8 30-2 18-12 33l60 12M210 452l132 32q-14 12-10 30 2 18-10 30l-120-25M502 518l-134-29q-12 12-10 30-2 18-10 30l122 27"/>
<path d="M230 155l-28 66-26 68M288 180l-4 60-18 66M196 221l-16 68M276 243l-14 64M586 236l-30 66-18 70M650 238l-40 148M548 302l-10 68M644 238l-38 145"/>
<path d="M142 440l-34 130M126 455l-32 112M210 470l-26 114M202 450l-16 130M500 524l-40 128M490 536l-26 110M566 532l-36 134M560 532l-34 128"/>
<path d="M248 62q18-4 36 6t36 8M176 288q24-6 44 8t46 10M606 152q20-6 36 2t32 4M536 370q20 18 34 8t40 8M166 356q20-4 34 8t36 6M96 568q20-6 40 8t50 8M522 438q20-2 34 6t36 10M456 648q20 18 38 8t38 10"/>
<path d="M250 66l-20 80M320 74l-24 88M608 142l-22 84M674 156l-22 82M166 358l-20 80M234 372l-24 80M524 438l-20 80M592 452l-22 80" stroke-width="7"/>
<path d="M250 82l60 12M246 102l60 12M240 122l60 12M234 140l62 14M228 158l64 14M218 176l68 14M212 194l72 14M204 212l80 16M198 232l80 16M190 250l84 18M182 268l84 20M606 162l60 12M602 180l60 12M596 198l60 12M590 216l60 12M584 236l60 12M580 254l62 12M570 272l68 14M562 292l70 14M552 310l76 16M548 328l74 16M542 348l76 16"/>
<path d="M162 374l66 12M156 392l66 14M152 412l66 14M146 432l62 12M136 456l66 14M130 486l68 14M118 510l76 16M112 528l76 18M106 546l76 18M518 456l64 12M514 476l64 12M508 494l64 12M502 514l64 14M494 536l66 16M486 566l64 14M470 592l74 16M468 610l70 16M460 628l74 18"/>
</g>

<g transform="translate(860 735) scale(.33333)" stroke="#000" stroke-width="3.300">
<path d="M68 38H54l30 84M44 202h12l46-46M140 98l24 4M260 92h-20l-20 64M80 122L472 206M80 122L64 182l36 6 12-34 198 46M84 130l390 84M118 146l180 42M308 206l-12 48M350 212l-16 50M280 206l-8 30M374 222l-8 30M352 216l112 22M352 210l114 26M472 198l-4 24-8 28M398 216l-6 24 12 6M306 256l2 58 34 8M328 258l2 62M306 352l104 22M352 342l62 14M308 338v18M352 334v16M304 236l34 8M300 250l36 10M312 228v28M324 232v26"/>
<path d="M104 150l206 50M352 214l110 24" stroke-width="6"/>
<path d="M120 130l-6 24M128 132l-6 24M136 134l-6 24M144 136l-6 24M152 138l-6 26M118 142l36 10M282 172l-6 22M290 174l-6 22M298 176l-6 22M306 178l-6 22M312 180l-6 22M280 184l32 8M360 188l-6 24M368 190l-6 24M376 192l-6 24M384 194l-6 24M390 196l-6 24M360 200l32 8" stroke-width="5"/>
<path d="M166 142l-6 24M178 144l-6 24M190 148l-6 24M202 150l-6 24M214 152l-6 24M226 156l-6 24M238 158l-6 24M250 162l-6 24M262 164l-6 24M274 168l-6 24M406 200l-6 24M420 204l-6 24M432 206l-6 24M446 210l-6 24"/><path d="M452 192v24M444 204h20" stroke-width="7"/>
</g>
</g>
</svg>

<div class="float acad">
<div class="cap"><strong>AutoCAD V...</strong><button class="x" aria-label="Close">x</button></div>
<div class="tools"><button class="tool" aria-label="Light view"><svg><use href="#i-std"/></svg></button><button class="tool" aria-label="Dark view"><svg><use href="#i-dark"/></svg></button><i class="sep"></i><button class="tool" aria-label="Reset"><svg><use href="#i-undo"/></svg></button></div>
</div>
<div class="float cloud">
<div class="cap"><strong>FGld Point Cloud</strong><button class="x" aria-label="Close">x</button></div>
<div class="tools"><button class="tool" aria-label="Open"><svg><use href="#i-folder"/></svg></button><button class="tool" aria-label="Target"><svg><use href="#i-target"/></svg></button><button class="tool" aria-label="Polyline"><svg><use href="#i-curve"/></svg></button><button class="tool" aria-label="Bounds"><svg><use href="#i-bounds"/></svg></button><button class="tool" aria-label="Console"><svg><use href="#i-py"/></svg></button><button class="tool" aria-label="Increase"><svg><use href="#i-plus"/></svg></button><button class="tool" aria-label="Decrease"><svg><use href="#i-minus"/></svg></button></div>
</div>
</section>
<div class="tray"><button>Default Tray</button></div>
</main>

<footer class="status">
<svg viewBox="0 0 20 20" aria-hidden="true"><circle cx="10" cy="10" r="8.500" fill="#eee" stroke="#999" stroke-width="1.200"/><path d="M10 16c-1-4-3-5-3-8a3 3 0 0 1 6 0c0 3-2 4-3 8z" fill="#999"/></svg>
<svg viewBox="0 0 20 20" aria-hidden="true"><circle cx="10" cy="10" r="8.500" fill="#fff" stroke="#111" stroke-width="1.700"/><circle cx="10" cy="5.500" r="1.700" fill="#111"/><path d="M7 8h6v4h-1v4H8v-4H7z" fill="#111"/></svg>
<i class="bar"></i>
<label for="measure">Measurements</label>
<input id="measure" type="text">
</footer>
</div>
</body>
</html>
```
FILE: styles.css
```css
* { box-sizing: border-box; }
body { margin: 0; font: 15px/20px "Noto Sans", sans-serif; color: #111; background: #efefef; }
button { font: inherit; color: inherit; border: 0; padding: 0; background: none; }
svg { fill: none; display: block; flex: none; }
.sprite { position: absolute; width: 0; height: 0; }
.app { display: flex; flex-direction: column; height: 100vh; min-height: 860px; }

.titlebar { display: flex; align-items: center; height: 29px; padding-left: 2px; background: #eef2fa; }
.logo { width: 20px; height: 20px; }
h1 { margin: 0 auto 0 7px; font-size: 14px; font-weight: 400; line-height: 18px; padding-bottom: 2px; }
.winctl { display: flex; padding-right: 3px; }
.winctl button { width: 59px; height: 29px; display: grid; place-items: center; }
.winctl svg { width: 14px; height: 14px; }

.menubar { display: flex; gap: 19px; height: 24px; padding: 2px 8px 2px; background: #fff; font-size: 14px; }
.menubar u { text-underline-offset: 2px; }

.toolrow { display: flex; height: 37px; gap: 28px; background: #ededed; }
.group { display: flex; align-items: center; border-right: 1px solid #c4c4c4; background: #f1f1f1; }
.tags { margin-left: 26px; padding-right: 4px; }
.grip { width: 10px; height: 30px; flex: none; background: radial-gradient(circle at 5px 2px, #aaa 1px, transparent 2px) 0 0 / 10px 4px; }
.sep { width: 1px; height: 28px; margin: 0 4px 0 3px; flex: none; background: #8a8a8a; }
.tool { width: 32px; height: 32px; display: flex; align-items: center; justify-content: center; border: 1px solid transparent; flex: none; }
.tool svg { width: 24px; height: 24px; }
.tool.on { background: #cce6fb; border-color: #a6d0f0; border-radius: 2px; }
.drop { width: 45px; gap: 5px; }
.drop::after { content: ""; border: 3px solid transparent; border-top: 4px solid #111; border-bottom: 0; }
.glyph-a1 { font: bold 10px "Liberation Mono", monospace; fill: #444; }
.glyph-py { font: bold 8px "Noto Sans", sans-serif; fill: #d99b1d; }
.tagbox { display: flex; align-items: center; width: 158px; height: 31px; padding-left: 8px; background: #fff; }
.check { width: 10px; height: 10px; }
.tagbox select { flex: 1; appearance: none; border: 0; padding: 0 0 0 10px; background: none; color: #111; font: 14px/20px "Noto Sans", sans-serif; }
.chev { width: 13px; height: 29px; }

.work { flex: 1; display: flex; min-height: 0; }
.side { width: 68px; flex: none; }
.palette { display: flex; flex-direction: column; padding: 4px 2px 0; gap: 3px; border-bottom: 1px solid #bbb; border-right: 1px solid #ccc; background: #f1f1f1; }
.hgrip { height: 3px; background: radial-gradient(circle at 2px 1px, #aaa 1px, transparent 2px) 0 0 / 4px 4px; }
.pair { display: grid; grid-template-columns: 32px 32px; }
.pair + .pair { border-top: 1px solid #888; padding-top: 4px; }
.viewport { position: relative; flex: 1; min-width: 0; overflow: hidden; background: #fff; border: solid #777; border-width: 2px 1px 1px 2px; border-right-color: #ddd; border-bottom-color: #ddd; }
.model { position: absolute; inset: 0; width: 100%; height: 100%; }
.leader { font: 20px "DejaVu Sans Condensed", "DejaVu Sans", sans-serif; fill: #3c3c3c; }

.float { position: absolute; padding: 2px 0 2px 2px; background: #eff1f6; border: solid; border-width: 0 2px 2px 0; border-color: #6c7480; }
.acad { left: 66px; top: 44px; }
.cloud { right: 17px; top: 13px; }
.cap { display: flex; align-items: center; justify-content: space-between; height: 31px; padding: 0 4px; background: #a3bcdb; font-size: 14px; }
.x { width: 13px; height: 13px; background: #c5505a; color: #fff; font-size: 11px; font-weight: 700; line-height: 12px; }
.tools { display: flex; align-items: center; height: 34px; padding: 0 2px 0 3px; }
.tray { width: 27px; flex: none; padding: 3px 0 0 4px; background: #f5f5f5; }
.tray button { width: 23px; height: 108px; display: flex; align-items: center; border: 1px solid #bbb; border-right: 0; background: #efefef; writing-mode: vertical-rl; color: #555; font-size: 14px; }

.status { display: flex; align-items: center; gap: 15px; height: 34px; padding: 1px 5px 0 5px; border-top: 1px solid #fafafa; background: #efefef; }
.status svg { width: 20px; height: 20px; }
.bar { width: 1px; height: 15px; margin-left: -3px; background: #777; }
.status label { margin-left: auto; padding-left: 10px; margin-right: -6px; border-left: 1px solid #999; font-size: 15px; line-height: 15px; }
.status input { width: 249px; height: 25px; padding: 0 4px; border: 1px solid #b4bccb; background: #ecedf0; font: inherit; }
```
